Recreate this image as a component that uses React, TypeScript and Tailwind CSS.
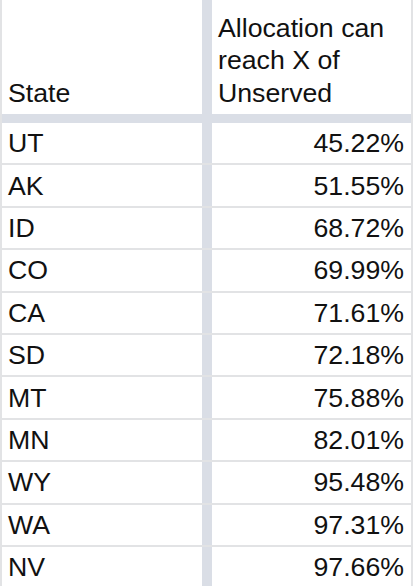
import React from 'react';

const rows: [string, string][] = [
  ['UT', '45.22%'],
  ['AK', '51.55%'],
  ['ID', '68.72%'],
  ['CO', '69.99%'],
  ['CA', '71.61%'],
  ['SD', '72.18%'],
  ['MT', '75.88%'],
  ['MN', '82.01%'],
  ['WY', '95.48%'],
  ['WA', '97.31%'],
  ['NV', '97.66%'],
];

export default function App() {
  return (
    <div className="w-[416px] h-[586px] overflow-hidden bg-white font-['Liberation_Sans',Arial,sans-serif] text-[26.7px] text-[#111]">
      <div className="w-[413px] border-l-2 border-r-2 border-[#e2e3e5]">
        {/* Header row */}
        <div className="flex h-[123px] border-b-[9px] border-[#dadee6]">
          <div className="w-[200px] flex items-end px-[6px] pb-[5px] leading-[32.5px]">State</div>
          <div className="w-[10px] bg-[#dadee6]" />
          <div className="flex-1 flex items-end pl-[6px] pr-[4px] pb-[5px] leading-[32.5px]">
            Allocation can reach X of Unserved
          </div>
        </div>

        {/* Data rows */}
        {rows.map(([state, pct]) => (
          <div key={state} className="flex h-[42.4px] border-b-2 border-[#e2e3e5]">
            <div className="w-[200px] flex items-center px-[6px]">{state}</div>
            <div className="w-[10px] bg-[#dadee6]" />
            <div className="flex-1 flex items-center justify-end px-[7px]">{pct}</div>
          </div>
        ))}
      </div>
    </div>
  );
}
